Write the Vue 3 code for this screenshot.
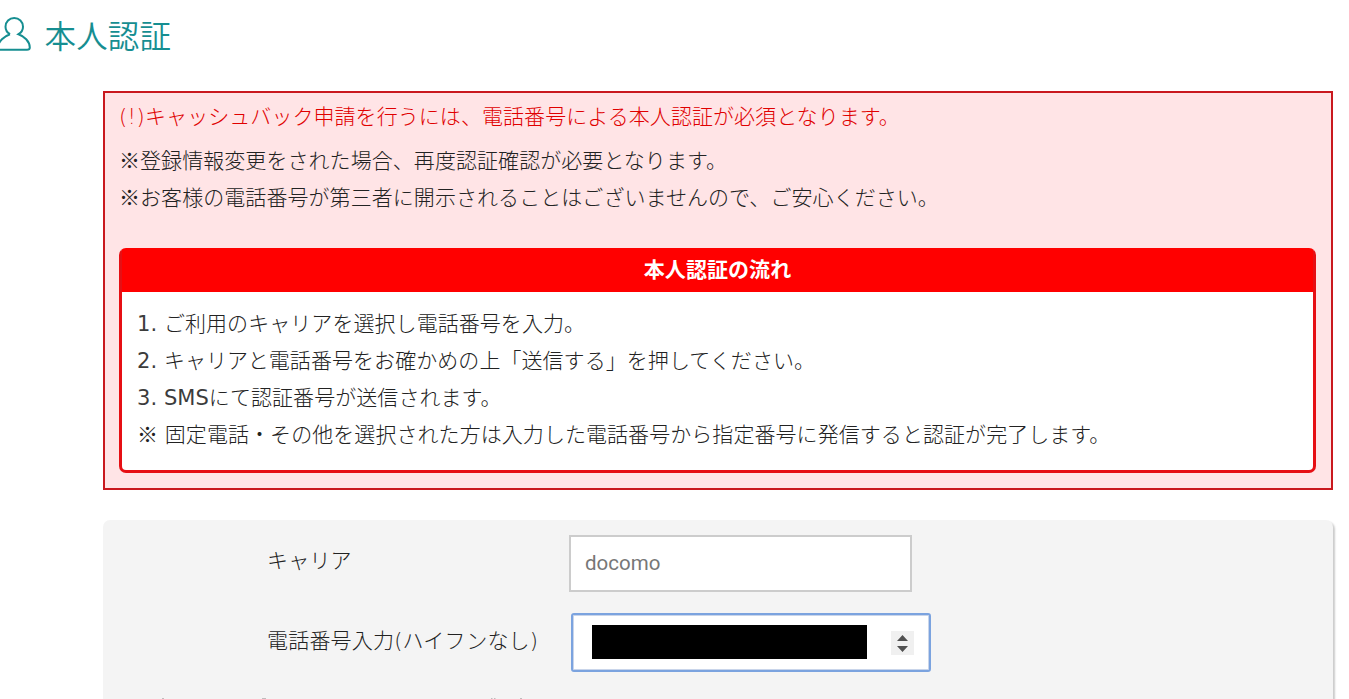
<script setup>
import { ref } from 'vue'

const carrier = ref('')
const notes = [
  '登録情報変更をされた場合、再度認証確認が必要となります。',
  'お客様の電話番号が第三者に開示されることはございませんので、ご安心ください。'
]
const steps = [
  { mark: '1. ', text: 'ご利用のキャリアを選択し電話番号を入力。' },
  { mark: '2. ', text: 'キャリアと電話番号をお確かめの上「送信する」を押してください。' },
  { mark: '3. SMS', text: 'にて認証番号が送信されます。' }
]
</script>

<template>
  <main class="page">
    <h1 class="title">
      <svg class="user-icon" width="34" height="38" viewBox="0 0 34 38">
        <path d="M10 19.200C7.200 17.500 5.500 15 5.500 11.700C5.500 6.700 9.300 3 14.200 3S23 6.700 23 11.700C23 15 21.300 17.500 18.500 19.200C24 21 29.800 26.500 29.800 32.500C29.800 34 29 34.800 27 34.800H1C-1 34.800-2 34-2 32.500C-2 26.500 4.500 21 10 19.200" />
      </svg>
      <span>本人認証</span>
    </h1>

    <section class="notice">
      <p class="alert"><span class="bang">(!)</span>キャッシュバック申請を行うには、電話番号による本人認証が必須となります。</p>
      <p v-for="note in notes" :key="note"><span class="kome">※</span>{{ note }}</p>
      <div class="flow">
        <h2 class="flow-title">本人認証の流れ</h2>
        <ul class="steps">
          <li v-for="step in steps" :key="step.mark"><span class="latin">{{ step.mark }}</span>{{ step.text }}</li>
          <li><span class="kome">※</span> 固定電話・その他を選択された方は入力した電話番号から指定番号に発信すると認証が完了します。</li>
        </ul>
      </div>
    </section>

    <form class="form" @submit.prevent>
      <div class="row">
        <label for="carrier">キャリア</label>
        <input id="carrier" v-model="carrier" class="carrier" type="text" placeholder="docomo" />
      </div>
      <div class="row phone-row">
        <label>電話番号入力(ハイフンなし)</label>
        <div class="phone">
          <span class="mask"></span>
          <span class="spinner">
            <svg width="23" height="24" viewBox="0 0 23 24">
              <path d="M6 10L11.500 4L17 10ZM6 15H17L11.500 21Z" />
            </svg>
          </span>
        </div>
      </div>
      <!-- top edge of the next line, cut off by the fold -->
      <svg class="cut-line" width="400" height="2" viewBox="0 0 400 2">
        <path d="M25 1H27M125 1H129M354 1H355.500M357 1H358.500M383 1H385" />
      </svg>
    </form>
  </main>
</template>

<style>
body {
  margin: 0;
  background: #fff;
}
</style>

<style scoped>
.page {
  box-sizing: border-box;
  height: 699px;
  padding: 15px 14px 0 0;
  overflow: hidden;
  color: #222;
  font-family: "DejaVu Sans", "Noto Sans CJK JP", sans-serif;
  font-size: 21px;
  font-weight: 300;
  letter-spacing: 0.06px;
  line-height: 37px;
}

.title {
  display: flex;
  gap: 10.5px;
  height: 76px;
  margin: 0;
  color: #168e91;
  font-family: "Noto Sans CJK JP", sans-serif;
  font-size: 31.5px;
  font-weight: 350;
  letter-spacing: 0.15px;
  line-height: 38px;
}

.user-icon {
  fill: none;
  stroke: #168e91;
  stroke-width: 2;
}

.notice {
  box-sizing: border-box;
  width: 1230px;
  height: 399px;
  margin-left: 103px;
  padding: 6px 15px 0 14px;
  border: 2px solid #c9181e;
  background: #ffe4e6;
}

p {
  margin: 0;
  white-space: nowrap;
}

.alert {
  margin-bottom: 7px;
  color: #e00000;
}

.latin {
  color: #3c3c3c;
  font-weight: 400;
  white-space: pre;
}

.bang {
  letter-spacing: 0.4px;
}

.kome {
  font-family: "Noto Sans CJK JP", sans-serif;
  line-height: 1;
}

.flow {
  box-sizing: border-box;
  height: 225px;
  margin-top: 31px;
  border: 3px solid #e60f14;
  border-top-color: #f00;
  border-radius: 7px;
  background: #fff;
}

.flow-title {
  height: 41px;
  margin: 0;
  background: #f00;
  color: #fff;
  font-size: 21px;
  font-weight: 700;
  line-height: 38px;
  text-align: center;
}

.steps {
  margin: 0;
  padding: 14px 0 0 15px;
  list-style: none;
  white-space: nowrap;
}

.steps li {
  height: 37px;
}

.form {
  box-sizing: border-box;
  width: 1230px;
  height: 220px;
  margin: 30px 0 0 103px;
  padding: 15px 0 0 164px;
  border-radius: 7px;
  background: #f4f4f4;
  box-shadow: 2px 2px 2px #ccc;
}

.row {
  display: flex;
}

.row label {
  width: 302px;
  padding-top: 8px;
  letter-spacing: 0.2px;
  white-space: nowrap;
}

.phone-row {
  margin-top: 21px;
}

.phone-row label {
  width: 304px;
  padding-top: 10px;
}

.carrier {
  box-sizing: border-box;
  width: 343px;
  height: 57px;
  padding: 0 14px 2px;
  border: 2px solid #ccc;
  background: #fff;
  font-family: Roboto, sans-serif;
  font-size: 20.5px;
}

.carrier::placeholder {
  color: #777;
}

.phone {
  display: flex;
  align-items: center;
  box-sizing: border-box;
  width: 360px;
  height: 59px;
  padding: 0 15px 0 19px;
  border: 2px solid #7ba3df;
  border-radius: 3px;
  background: #fff;
  box-shadow: inset 0 0 0 1px #c9d5ea;
}

.mask {
  width: 275px;
  height: 34px;
  margin-bottom: 2px;
  background: #000;
}

.spinner {
  display: flex;
  margin-left: auto;
  background: #f0f0f0;
}

.spinner svg {
  fill: #505050;
}

.cut-line {
  display: block;
  margin: 26px 0 0 -130px;
  fill: none;
  stroke: #888;
}
</style>
